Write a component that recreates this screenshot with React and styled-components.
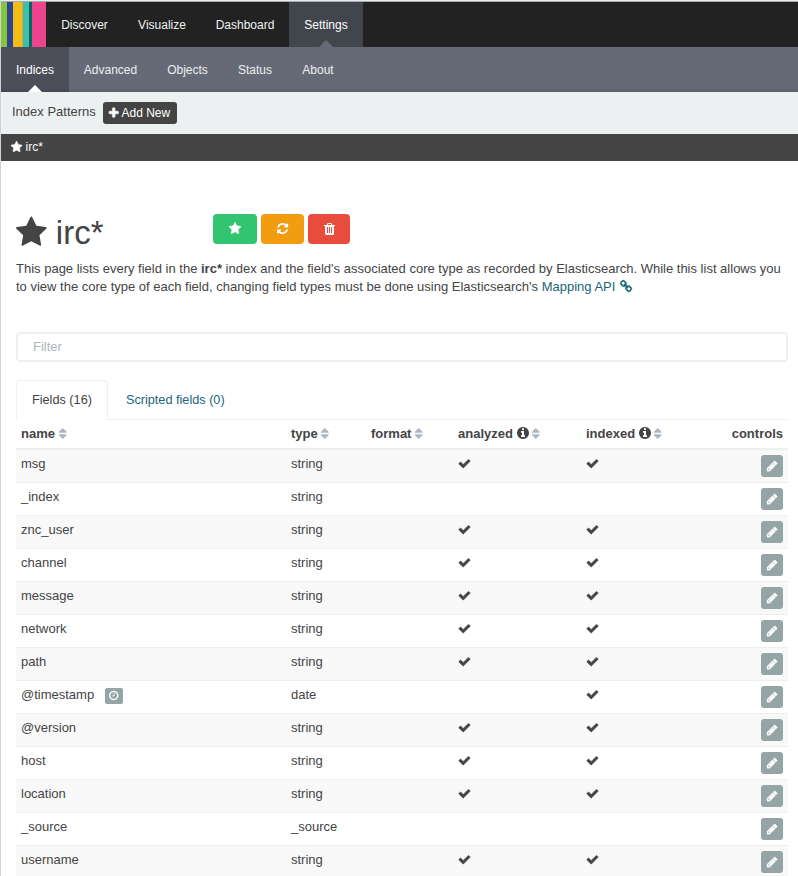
import React from "react";
import styled, { createGlobalStyle, css } from "styled-components";

const GlobalStyle = createGlobalStyle`
  *, *::before, *::after { box-sizing: border-box; }
  html, body { margin: 0; padding: 0; background: #fff; }
  body { overflow: hidden; }
`;

/* Icon outlines on a 1792-unit em; w is the advance width of each glyph. */
const ICONS = {
  star: { w: 1664, d: "M1728 647q0 22-26 48l-363 354 86 500q1 7 1 20 0 21-10.5 35.5t-30.5 14.5q-19 0-40-12l-449-236-449 236q-22 12-40 12-21 0-31.5-14.5t-10.5-35.5q0-6 2-20l86-500-364-354q-25-27-25-48 0-37 56-46l502-73 225-455q19-41 49-41t49 41l225 455 502 73q56 9 56 46z" },
  plus: { w: 1408, d: "M1600 736v192q0 40-28 68t-68 28h-416v416q0 40-28 68t-68 28h-192q-40 0-68-28t-28-68v-416h-416q-40 0-68-28t-28-68v-192q0-40 28-68t68-28h416v-416q0-40 28-68t68-28h192q40 0 68 28t28 68v416h416q40 0 68 28t28 68z" },
  refresh: { w: 1536, d: "M1639 1056q0 5-1 7-64 268-268 434.5t-478 166.5q-146 0-282.5-55t-243.5-157l-129 129q-19 19-45 19t-45-19-19-45v-448q0-26 19-45t45-19h448q26 0 45 19t19 45-19 45l-137 137q71 66 161 102t187 36q134 0 250-65t186-179q11-17 53-117 8-23 30-23h192q13 0 22.5 9.5t9.5 22.5zm25-800v448q0 26-19 45t-45 19h-448q-26 0-45-19t-19-45 19-45l138-138q-148-137-349-137-134 0-250 65t-186 179q-11 17-53 117-8 23-30 23h-199q-13 0-22.5-9.5t-9.5-22.5v-7q65-268 270-434.5t480-166.5q146 0 284 55.5t245 156.5l130-129q19-19 45-19t45 19 19 45z" },
  trash: { w: 1408, d: "M704 1376v-704q0-14-9-23t-23-9h-64q-14 0-23 9t-9 23v704q0 14 9 23t23 9h64q14 0 23-9t9-23zm256 0v-704q0-14-9-23t-23-9h-64q-14 0-23 9t-9 23v704q0 14 9 23t23 9h64q14 0 23-9t9-23zm256 0v-704q0-14-9-23t-23-9h-64q-14 0-23 9t-9 23v704q0 14 9 23t23 9h64q14 0 23-9t9-23zm-544-992h448l-48-117q-7-9-17-11h-317q-10 2-17 11zm928 32v64q0 14-9 23t-23 9h-96v948q0 83-47 143.5t-113 60.5h-832q-66 0-113-58.5t-47-141.5v-952h-96q-14 0-23-9t-9-23v-64q0-14 9-23t23-9h309l70-167q15-37 54-63t79-26h320q40 0 79 26t54 63l70 167h309q14 0 23 9t9 23z" },
  check: { w: 1792, d: "M1671 566q0 40-28 68l-724 724-136 136q-28 28-68 28t-68-28l-136-136-362-362q-28-28-28-68t28-68l136-136q28-28 68-28t68 28l294 295 656-657q28-28 68-28t68 28l136 136q28 28 28 68z" },
  info: { w: 1536, d: "M1152 1376v-160q0-14-9-23t-23-9h-96v-512q0-14-9-23t-23-9h-320q-14 0-23 9t-9 23v160q0 14 9 23t23 9h96v320h-96q-14 0-23 9t-9 23v160q0 14 9 23t23 9h448q14 0 23-9t9-23zm-128-896v-160q0-14-9-23t-23-9h-192q-14 0-23 9t-9 23v160q0 14 9 23t23 9h192q14 0 23-9t9-23zm640 416q0 209-103 385.5t-279.5 279.5-385.5 103-385.5-103-279.5-279.5-103-385.5 103-385.5 279.5-279.5 385.5-103 385.5 103 279.5 279.5 103 385.5z" },
  pencil: { w: 1536, d: "M491 1536l91-91-235-235-91 91v107h128v128h107zm523-928q0-22-22-22-10 0-17 7l-542 542q-7 7-7 17 0 22 22 22 10 0 17-7l542-542q7-7 7-17zm-54-192l416 416-832 832h-416v-416zm683 96q0 53-37 90l-166 166-416-416 166-165q36-38 90-38 53 0 91 38l235 234q37 39 37 91z" },
  sort: { w: 1024, d: "M1408 1088q0 26-19 45l-448 448q-19 19-45 19t-45-19l-448-448q-19-19-19-45t19-45 45-19h896q26 0 45 19t19 45zm0-384q0 26-19 45t-45 19h-896q-26 0-45-19t-19-45 19-45l448-448q19-19 45-19t45 19l448 448q19 19 19 45z" },
  clock: { w: 1536, d: "M1024 544v448q0 14-9 23t-23 9h-320q-14 0-23-9t-9-23v-64q0-14 9-23t23-9h224v-352q0-14 9-23t23-9h64q14 0 23 9t9 23zm416 352q0-148-73-273t-198-198-273-73-273 73-198 198-73 273 73 273 198 198 273 73 273-73 198-198 73-273zm224 0q0 209-103 385.5t-279.5 279.5-385.5 103-385.5-103-279.5-279.5-103-385.5 103-385.5 279.5-279.5 385.5-103 385.5 103 279.5 279.5 103 385.5z" },
  link: { w: 1664, d: "M1520 1216q0-40-28-68l-208-208q-28-28-68-28-42 0-72 32 3 3 19 18.5t21.5 21.5 15 19 13 25.5 3.5 27.5q0 40-28 68t-68 28q-15 0-27.5-3.5t-25.5-13-19-15-21.5-21.5-18.5-19q-33 31-33 73 0 40 28 68l206 207q27 27 68 27 40 0 68-26l147-146q28-28 28-67zm-703-705q0-40-28-68l-206-207q-28-28-68-28-39 0-68 27l-147 146q-28 28-28 67 0 40 28 68l208 208q27 27 68 27 42 0 72-31-3-3-19-18.5t-21.5-21.5-15-19-13-25.5-3.5-27.5q0-40 28-68t68-28q15 0 27.5 3.5t25.5 13 19 15 21.5 21.5 18.5 19q33-31 33-73zm895 705q0 120-85 203l-147 146q-83 83-203 83-121 0-204-85l-206-207q-83-83-83-203 0-123 88-209l-88-88q-86 88-208 88-120 0-204-84l-208-208q-84-84-84-204t85-203l147-146q83-83 203-83 121 0 204 85l206 207q83 83 83 203 0 123-88 209l88 88q86-88 208-88 120 0 204 84l208 208q84 84 84 204z" },
};

const Glyph = styled.svg`
  display: inline-block;
  height: 1em;
  width: ${(p) => p.$w / 1792}em;
  font-size: ${(p) => (p.$size ? `${p.$size}px` : "inherit")};
  vertical-align: -0.143em;
  fill: currentColor;
  stroke: currentColor;
  stroke-width: ${(p) => p.$weight || 0};
  overflow: visible;
`;

function Icon({ name, weight, size }) {
  const { w, d } = ICONS[name];
  return (
    <Glyph $w={w} $weight={weight} $size={size} viewBox={`${896 - w / 2} 0 ${w} 1792`} aria-hidden="true">
      <path d={d} />
    </Glyph>
  );
}

const Page = styled.div`
  height: 876px;
  overflow: hidden;
  border-left: 1px solid #cdd3db;
  border-top: 1px solid #e9ecee;
  background: #fff;
  color: #444;
  font: 13px/18px "Liberation Sans", Arial, sans-serif;
`;

const TopBar = styled.nav`
  display: flex;
  height: 46px;
  border-top: 1px solid #a5abae;
  background: #222;
`;

const Logo = styled.div`
  width: 45px;
  background: linear-gradient(
    to right,
    #86c440 0 6px,
    #2f4490 6px 12px,
    #f4bb19 12px 21px,
    #d6a928 21px 22px,
    #3dbeb1 22px 28px,
    #05675b 28px 31px,
    #ec458d 31px 45px
  );
`;

const navItem = css`
  display: flex;
  justify-content: center;
  align-items: center;
  position: relative;
  height: 45px;
  font-size: 12px;
  text-decoration: none;
  width: ${(p) => p.$width}px;

  &::after {
    content: "";
    display: ${(p) => (p.$active ? "block" : "none")};
    position: absolute;
    bottom: 0;
    left: calc(50% - 7px);
    border: solid transparent;
    border-width: 0 7px 7px;
  }
`;

const TopItem = styled.a`
  ${navItem}
  color: ${(p) => (p.$active ? "#fff" : "#f0f1f1")};
  background: ${(p) => (p.$active ? "#41464d" : "transparent")};
  &::after { border-bottom-color: #666a76; }
`;

const SubBar = styled.nav`
  display: flex;
  height: 45px;
  background: linear-gradient(to bottom, #666a76 0 41px, #5b5e6a 45px);
`;

const SubItem = styled.a`
  ${navItem}
  color: ${(p) => (p.$active ? "#fff" : "#eceef0")};
  background: ${(p) => (p.$active ? "linear-gradient(to bottom, #4c4f5a 0 41px, #454852 45px)" : "transparent")};
  &::after { border-bottom-color: #fff; }
`;

const PatternBar = styled.header`
  display: flex;
  align-items: flex-start;
  height: 42px;
  padding: 10px 11px 0;
  gap: 7px;
  line-height: 20px;
  background: #ecf0f1;
`;

const AddButton = styled.button`
  width: 74px;
  height: 22px;
  padding: 0;
  border: 0;
  border-radius: 3px;
  background: #444;
  color: #fff;
  font: 12px/22px "Liberation Sans", Arial, sans-serif;
`;

const PatternRow = styled.div`
  height: 27px;
  padding: 0 10px;
  background: #444;
  color: #fff;
  font-size: 12px;
  line-height: 26px;
`;

const Content = styled.main`
  padding: 53px 10px 0 15px;
`;

const TitleRow = styled.div`
  display: flex;
  align-items: flex-start;
`;

const Title = styled.h1`
  width: 197px;
  margin: 0;
  font-size: 33px;
  font-weight: 400;
  line-height: 37px;
`;

const Actions = styled.div`
  display: flex;
  gap: 4px;
`;

const ActionButton = styled.button`
  width: ${(p) => p.$width}px;
  height: 30px;
  padding: 0;
  border: 0;
  border-radius: 4px;
  background: ${(p) => p.$color};
  color: #fff;
  font: 13px/29px "Liberation Sans", Arial, sans-serif;
`;

const Intro = styled.p`
  margin: 9px 0 0;
`;

const Link = styled.a`
  color: #1b6578;
  text-decoration: none;
  ${Glyph} { margin-left: 1px; }
`;

const Filter = styled.input`
  display: block;
  width: 100%;
  height: 30px;
  margin-top: 36px;
  padding: 0 15px 1px;
  border: 2px solid #ecf0f1;
  border-radius: 4px;
  outline: none;
  font: 13px "Liberation Sans", Arial, sans-serif;
  &::placeholder { color: #acb6c0; opacity: 1; }
`;

const Tabs = styled.div`
  display: flex;
  height: 40px;
  margin-top: 18px;
  border-bottom: 1px solid #ecf0f1;
`;

const Tab = styled.a`
  height: 40px;
  margin-right: 2px;
  padding: 10px 15px;
  border: 1px solid ${(p) => (p.$active ? "#ecf0f1" : "transparent")};
  border-bottom-color: ${(p) => (p.$active ? "#fff" : "transparent")};
  border-radius: 4px 4px 0 0;
  color: ${(p) => (p.$active ? "#444" : "#1b6578")};
  font-size: 12.7px;
`;

const FieldTable = styled.table`
  width: 100%;
  table-layout: fixed;
  border-collapse: separate;
  border-spacing: 0;
`;

const Col = styled.col`
  width: ${(p) => p.$width}px;
`;

const Th = styled.th`
  height: 30px;
  padding: 5px 5px 5px;
  border-bottom: 2px solid #ecf0f1;
  text-align: ${(p) => p.$align || "left"};
  vertical-align: top;
  white-space: nowrap;
`;

const SortMark = styled.span`
  color: #acb6c0;
`;

const Td = styled.td`
  height: 33px;
  padding: 5px 5px 0;
  border-bottom: 1px solid #ecf0f1;
  text-align: ${(p) => p.$align || "left"};
  vertical-align: top;
`;

const Tr = styled.tr`
  &:nth-child(odd) { background: #f9f9f9; }
`;

const TimeBadge = styled.span`
  display: inline-block;
  width: 18px;
  height: 16px;
  margin: 2px 0 0 11px;
  border-radius: 2px;
  background: #95a5a6;
  color: #fff;
  font-size: 11px;
  line-height: 15px;
  text-align: center;
  vertical-align: top;
`;

const EditButton = styled.button`
  display: block;
  width: 22px;
  height: 22px;
  margin: 0 0 0 auto;
  padding: 0;
  border: 0;
  border-radius: 3px;
  background: #95a5a6;
  color: #fff;
  font: 12px/22px "Liberation Sans", Arial, sans-serif;
`;

const TOP = [["Discover", 77], ["Visualize", 78], ["Dashboard", 88], ["Settings", 74]];
const SUB = [["Indices", 68], ["Advanced", 83], ["Objects", 71], ["Status", 64], ["About", 62]];
const HEADS = [["name"], ["type"], ["format"], ["analyzed", true], ["indexed", true]];
const FIELDS = [
  ["msg", "string", true, true],
  ["_index", "string", false, false],
  ["znc_user", "string", true, true],
  ["channel", "string", true, true],
  ["message", "string", true, true],
  ["network", "string", true, true],
  ["path", "string", true, true],
  ["@timestamp", "date", false, true],
  ["@version", "string", true, true],
  ["host", "string", true, true],
  ["location", "string", true, true],
  ["_source", "_source", false, false],
  ["username", "string", true, true],
];

export default function App() {
  return (
    <Page>
      <GlobalStyle />
      <TopBar>
        <Logo />
        {TOP.map(([label, width]) => (
          <TopItem key={label} $width={width} $active={label === "Settings"}>{label}</TopItem>
        ))}
      </TopBar>
      <SubBar>
        {SUB.map(([label, width]) => (
          <SubItem key={label} $width={width} $active={label === "Indices"}>{label}</SubItem>
        ))}
      </SubBar>
      <PatternBar>
        <span>Index Patterns</span>
        <AddButton><Icon name="plus" weight={90} /> Add New</AddButton>
      </PatternBar>
      <PatternRow><Icon name="star" weight={70} /> irc*</PatternRow>
      <Content>
        <TitleRow>
          <Title><Icon name="star" /> irc*</Title>
          <Actions>
            <ActionButton $width={44} $color="#31c471" aria-label="Set as default"><Icon name="star" weight={50} /></ActionButton>
            <ActionButton $width={43} $color="#f39c12" aria-label="Refresh fields"><Icon name="refresh" /></ActionButton>
            <ActionButton $width={42} $color="#e74c3c" aria-label="Remove pattern"><Icon name="trash" size={14} /></ActionButton>
          </Actions>
        </TitleRow>
        <Intro>
          This page lists every field in the <strong>irc*</strong> index and the field's associated core type as
          recorded by Elasticsearch. While this list allows you to view the core type of each field, changing field
          types must be done using Elasticsearch's <Link>Mapping API <Icon name="link" weight={40} /></Link>
        </Intro>
        <Filter placeholder="Filter" />
        <Tabs>
          <Tab $active>Fields (16)</Tab>
          <Tab>Scripted fields (0)</Tab>
        </Tabs>
        <FieldTable>
          <colgroup>
            <Col $width={270} /><Col $width={80} /><Col $width={87} /><Col $width={128} /><Col $width={128} /><Col $width={79} />
          </colgroup>
          <thead>
            <tr>
              {HEADS.map(([label, info]) => (
                <Th key={label}>
                  {label} {info && <><Icon name="info" size={14} /> </>}
                  <SortMark><Icon name="sort" weight={60} /></SortMark>
                </Th>
              ))}
              <Th $align="right">controls</Th>
            </tr>
          </thead>
          <tbody>
            {FIELDS.map(([name, type, analyzed, indexed]) => (
              <Tr key={name}>
                <Td>{name}{name === "@timestamp" && <TimeBadge><Icon name="clock" /></TimeBadge>}</Td>
                <Td>{type}</Td>
                <Td />
                <Td>{analyzed && <Icon name="check" weight={60} />}</Td>
                <Td>{indexed && <Icon name="check" weight={60} />}</Td>
                <Td $align="right"><EditButton aria-label="Edit"><Icon name="pencil" weight={50} /></EditButton></Td>
              </Tr>
            ))}
          </tbody>
        </FieldTable>
      </Content>
    </Page>
  );
}
